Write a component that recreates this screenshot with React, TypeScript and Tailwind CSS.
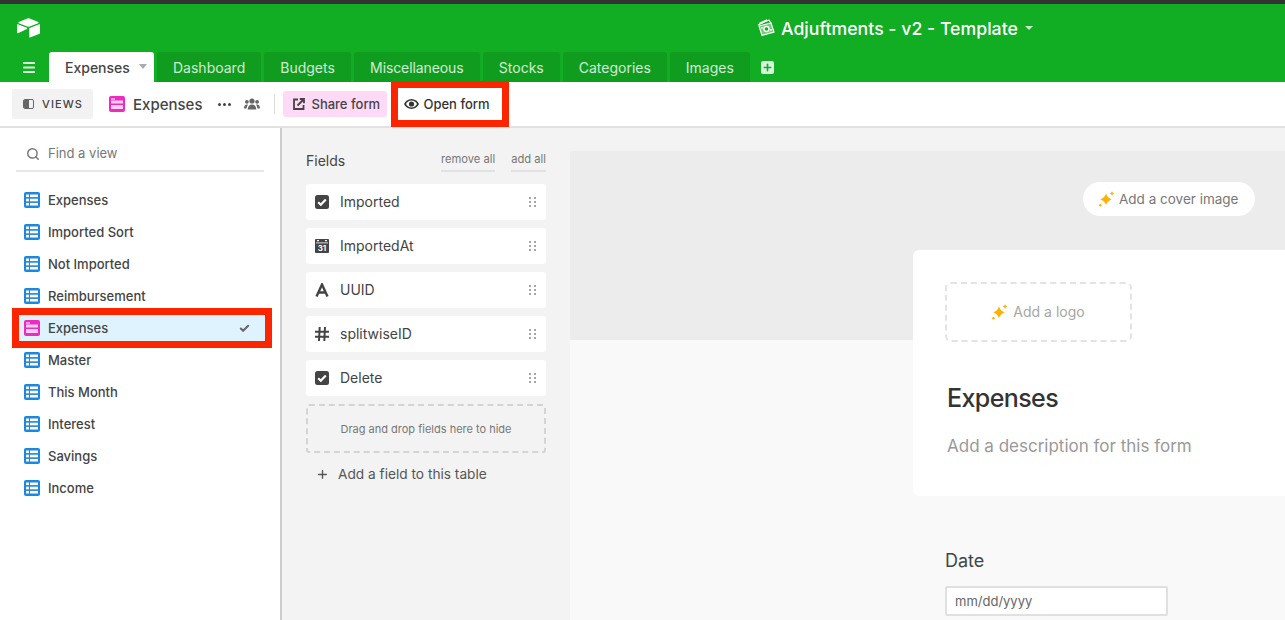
import { useState } from 'react'
import { Check, Search, Plus } from 'lucide-react'

const TABS = [
  { label: 'Dashboard', className: '' },
  { label: 'Budgets', className: '' },
  { label: 'Miscellaneous', className: 'w-[126px] justify-center tracking-[-0.1px]' },
  { label: 'Stocks', className: '' },
  { label: 'Categories', className: '' },
  { label: 'Images', className: '' },
]

const VIEWS = [
  { label: 'Expenses', kind: 'grid' },
  { label: 'Imported Sort', kind: 'grid' },
  { label: 'Not Imported', kind: 'grid' },
  { label: 'Reimbursement', kind: 'grid' },
  { label: 'Expenses', kind: 'form', active: true },
  { label: 'Master', kind: 'grid' },
  { label: 'This Month', kind: 'grid' },
  { label: 'Interest', kind: 'grid' },
  { label: 'Savings', kind: 'grid' },
  { label: 'Income', kind: 'grid' },
]

const FIELDS = [
  { label: 'Imported', kind: 'check' },
  { label: 'ImportedAt', kind: 'date' },
  { label: 'UUID', kind: 'text' },
  { label: 'splitwiseID', kind: 'number' },
  { label: 'Delete', kind: 'check' },
]

function Logo() {
  return (
    <svg width="23" height="20" viewBox="11 10 177 150" fill="#fff">
      <path d="M90.039 12.368 24.079 39.66c-3.667 1.519-3.63 6.729.062 8.192l66.235 26.266a24.58 24.58 0 0 0 18.12 0l66.236-26.266c3.69-1.463 3.729-6.673.062-8.192l-65.96-27.292a24.58 24.58 0 0 0-18.795 0" />
      <path d="M105.312 88.46v65.617c0 3.12 3.147 5.258 6.048 4.108l73.806-28.648a4.42 4.42 0 0 0 2.79-4.108V59.813c0-3.121-3.147-5.258-6.048-4.108l-73.806 28.648a4.42 4.42 0 0 0-2.79 4.108" />
      <path d="M88.078 91.846 66.174 102.422l-2.224 1.075-46.238 22.155c-2.93 1.414-6.672-.722-6.672-3.978V60.088c0-1.178.604-2.195 1.414-2.96a5 5 0 0 1 1.12-.84c1.104-.663 2.68-.84 4.02-.31l70.118 27.78c3.564 1.414 3.844 6.408.366 8.088" />
    </svg>
  )
}

function Hamburger() {
  return (
    <svg width="12" height="11" viewBox="0 0 12 11" fill="#fff" fillOpacity="0.85" className="shrink-0">
      <rect width="12" height="2" y="0" rx="0.500" />
      <rect width="12" height="2" y="4.500" rx="0.500" />
      <rect width="12" height="2" y="9" rx="0.500" />
    </svg>
  )
}

function GridIcon() {
  return (
    <svg width="16" height="16" viewBox="0 0 16 16" className="shrink-0">
      <rect width="16" height="16" rx="2" fill="#1a87e0" />
      <rect x="2" y="2.500" width="3" height="2.600" fill="#fff" />
      <rect x="6" y="2.500" width="8" height="2.600" fill="#fff" />
      <rect x="2" y="6.700" width="3" height="2.600" fill="#fff" />
      <rect x="6" y="6.700" width="8" height="2.600" fill="#fff" />
      <rect x="2" y="10.900" width="3" height="2.600" fill="#fff" />
      <rect x="6" y="10.900" width="8" height="2.600" fill="#fff" />
    </svg>
  )
}

function FormIcon() {
  return (
    <svg width="16" height="16" viewBox="0 0 16 16" className="shrink-0">
      <rect width="16" height="16" rx="2" fill="#ee2bbf" />
      <rect x="2" y="2.500" width="4" height="1" fill="#fff" />
      <rect x="2" y="4.500" width="12" height="3" fill="#ffd0f3" />
      <rect x="2" y="9" width="12" height="4" fill="#ffd0f3" />
    </svg>
  )
}

function Sparkle() {
  return (
    <svg width="16" height="16" viewBox="0 0 16 16" fill="#ffb000" className="shrink-0">
      <path d="M7 2.500Q8.500 6.900 12.800 8.300 8.500 9.700 7 14.100 5.500 9.700 1.200 8.300 5.500 6.900 7 2.500Z" />
      <path d="M13 .2Q13.600 2 15.300 2.500 13.600 3 13 4.800 12.400 3 10.700 2.500 12.400 2 13 .2Z" />
      <circle cx="1.400" cy="14.300" r="1.200" />
    </svg>
  )
}

function MoneyIcon() {
  return (
    <svg width="18" height="17" viewBox="0 0 18 17" fill="none" stroke="#fff" strokeWidth="1.200">
      <path d="M1 6 12 1l2 3.500" />
      <path d="M2.500 4.500 10 1" strokeWidth="1.600" />
      <path d="m2 7 12-3 3 9-12 3.400Z" fill="#ffffff66" />
      <circle cx="9.500" cy="10" r="2.500" fill="#11ad22" strokeWidth="1.400" />
      <circle cx="5" cy="8.800" r="0.900" fill="#fff" stroke="none" />
      <circle cx="14" cy="11" r="0.900" fill="#fff" stroke="none" />
    </svg>
  )
}

function PeopleIcon() {
  return (
    <svg width="16" height="12" viewBox="0 0 16 12" fill="#666" className="shrink-0">
      <circle cx="8" cy="3" r="2.600" />
      <circle cx="2.900" cy="3.800" r="1.900" />
      <circle cx="13.100" cy="3.800" r="1.900" />
      <path d="M3.700 11.500c0-3 1.700-5 4.300-5s4.300 2 4.300 5Z" />
      <path d="M0 10.500c0-2.300 1.100-3.900 3-3.900.4 0 .7.100 1 .2-.8.900-1.300 2.200-1.400 3.700Z" />
      <path d="M16 10.500c0-2.300-1.100-3.900-3-3.900-.4 0-.7.100-1 .2.800.9 1.300 2.200 1.400 3.700Z" />
    </svg>
  )
}

function ShareIcon() {
  return (
    <svg width="12" height="12" viewBox="0 0 12 12" fill="none" stroke="#444" strokeWidth="1.800" className="shrink-0">
      <path d="M5 1.500H1v9.500h9.500V7" />
      <path d="M4.500 7.500 11 1M6.800 1H11v4.200" />
    </svg>
  )
}

function EyeIcon() {
  return (
    <svg width="15" height="10" viewBox="0 0 15 10" className="shrink-0">
      <path d="M7.500 0C4 0 1.400 2.200 0 5c1.400 2.800 4 5 7.500 5S13.600 7.800 15 5C13.600 2.200 11 0 7.500 0Z" fill="#333" />
      <path d="M7.500 1.500C5 1.500 3.200 3 2 5c1.200 2 3 3.500 5.500 3.500S11.800 7 13 5c-1.200-2-3-3.500-5.500-3.500Z" fill="#fff" />
      <circle cx="7.500" cy="5" r="2.600" fill="#333" />
    </svg>
  )
}

function DragHandle() {
  return (
    <svg width="7" height="10" viewBox="0 0 7 10" fill="#a6a6a6" className="shrink-0">
      <rect x="0" y="0" width="2" height="2" />
      <rect x="5" y="0" width="2" height="2" />
      <rect x="0" y="4" width="2" height="2" />
      <rect x="5" y="4" width="2" height="2" />
      <rect x="0" y="8" width="2" height="2" />
      <rect x="5" y="8" width="2" height="2" />
    </svg>
  )
}

function FieldIcon({ kind }: { kind: string }) {
  if (kind === 'check') {
    return (
      <svg width="14" height="14" viewBox="0 0 14 14" className="shrink-0">
        <rect width="14" height="14" rx="2.500" fill="#444" />
        <path d="m3.200 7.200 2.600 2.500 5-5.200" fill="none" stroke="#fff" strokeWidth="2.200" />
      </svg>
    )
  }
  if (kind === 'date') {
    return (
      <svg width="14" height="14" viewBox="0 0 14 14" className="shrink-0">
        <rect width="14" height="14" rx="1" fill="#444" />
        <rect x="2" y="1" width="2" height="1.200" fill="#fff" />
        <rect x="10" y="1" width="2" height="1.200" fill="#fff" />
        <rect x="1" y="3.500" width="12" height="0.800" fill="#fff" />
        <text x="7" y="12" textAnchor="middle" fontSize="8" fontWeight="700" fill="#fff" fontFamily="Inter, sans-serif">
          31
        </text>
      </svg>
    )
  }
  if (kind === 'text') {
    return (
      <svg width="14" height="14" viewBox="0 0 14 14" fill="none" stroke="#444" strokeWidth="2.400" className="shrink-0">
        <path d="M1.500 13.500 7 1.500l5.500 12M3.500 9.500h7" />
      </svg>
    )
  }
  return (
    <svg width="14" height="14" viewBox="0 0 14 14" fill="none" stroke="#444" strokeWidth="2" className="shrink-0">
      <path d="M0 4.700h14M0 9.700h14M4.700 0 4 14M10 0l-.7 14" />
    </svg>
  )
}

export default function App() {
  const [query, setQuery] = useState('')

  return (
    <div className="flex h-[620px] w-[1285px] flex-col overflow-hidden bg-white font-['Inter',sans-serif] text-[#444]">
      <div className="h-[4px] shrink-0 bg-[#333]" />

      {/* Green base header */}
      <header className="h-[78px] shrink-0 bg-[#11ad22]">
        <div className="flex h-[48px] items-center pl-[17px] text-white">
          <Logo />
          <div className="ml-[717px] flex items-center">
            <MoneyIcon />
            <span className="ml-[6px] pt-[2px] text-[17.700px] font-medium">Adjuftments - v2 - Template</span>
            <span className="ml-[7px] mt-[1px] h-0 w-0 border-x-[4px] border-t-[4px] border-x-transparent border-t-white/80" />
          </div>
        </div>
        <div className="flex h-[30px] items-stretch">
          <div className="ml-[23px] mr-[14px] self-center">
            <Hamburger />
          </div>
          <div className="flex w-[105px] items-center rounded-t-[3px] bg-white pl-[16px] text-[14px] font-medium text-[#444]">
            Expenses
            <span className="ml-[9px] mb-[2px] h-0 w-0 border-x-[4px] border-t-[5px] border-x-transparent border-t-[#aaa]" />
          </div>
          <div className="ml-[3px] flex gap-[3px]">
            {TABS.map((tab) => (
              <div
                key={tab.label}
                className={`flex items-center rounded-t-[3px] bg-[#0f9c1f] px-[16px] text-[14px] text-white/80 ${tab.className}`}
              >
                {tab.label}
              </div>
            ))}
          </div>
          <div className="ml-[11px] flex h-[13px] w-[13px] items-center justify-center self-center rounded-[2px] bg-white/85">
            <Plus size={11} strokeWidth={3.500} className="text-[#11ad22]" />
          </div>
        </div>
      </header>

      {/* View toolbar */}
      <div className="flex h-[46px] shrink-0 items-center border-b-2 border-[#e2e2e2] pl-[12px]">
        <div className="flex h-[30px] w-[81px] items-center rounded-[3px] bg-[#f2f2f2] pl-[11px]">
          <span className="flex h-[10px] w-[11px] overflow-hidden rounded-[2px] border border-[#666]">
            <span className="w-1/2 bg-[#666]" />
          </span>
          <span className="ml-[8px] text-[11px] font-medium tracking-[0.1em] text-[#444]">VIEWS</span>
        </div>
        <div className="ml-[16px]">
          <FormIcon />
        </div>
        <span className="ml-[8px] pt-[2px] text-[15px] font-medium">Expenses</span>
        <span className="ml-[16px] flex gap-[2px]">
          <span className="h-[3px] w-[3px] rounded-full bg-[#444]" />
          <span className="h-[3px] w-[3px] rounded-full bg-[#444]" />
          <span className="h-[3px] w-[3px] rounded-full bg-[#444]" />
        </span>
        <span className="ml-[13px]">
          <PeopleIcon />
        </span>
        <span className="ml-[14px] h-[20px] w-px bg-[#ddd]" />
        <div className="ml-[8px] flex h-[26px] w-[104px] items-center rounded-[3px] bg-[#ffdaf6] pl-[10px] text-[13px] font-medium text-[#444]">
          <ShareIcon />
          <span className="ml-[6px] pt-[2px]">Share form</span>
        </div>
        <div className="ml-[11px] flex h-[32px] w-[104px] items-center bg-white pl-[6px] text-[13px] font-medium text-[#333] outline-[7px] outline-[#fb2500]">
          <EyeIcon />
          <span className="ml-[4px] pt-[2px]">Open form</span>
        </div>
      </div>

      <div className="flex min-h-0 flex-1">
        {/* Views sidebar */}
        <aside className="w-[282px] shrink-0 border-r-2 border-[#ccc] bg-white">
          <label className="mx-[16px] mt-[10px] flex h-[34px] items-center border-b-2 border-[#e6e6e6] pb-[1px] pl-[10px]">
            <Search size={14} strokeWidth={2.500} className="text-[#777]" />
            <input
              value={query}
              onChange={(e) => setQuery(e.target.value)}
              placeholder="Find a view"
              className="ml-[8px] w-[180px] bg-transparent text-[13px] outline-none placeholder:text-[#777]"
            />
          </label>
          <ul className="mt-[15px] flex flex-col gap-[6px] pl-[19px] pr-[15px]">
            {VIEWS.map((view, i) => (
              <li
                key={i}
                className={
                  view.active
                    ? 'flex h-[26px] items-center bg-[#dff3fe] pl-[5px] pr-[15px] outline-[7px] outline-[#fb2500]'
                    : 'flex h-[26px] items-center pl-[5px] pr-[15px]'
                }
              >
                {view.kind === 'grid' ? <GridIcon /> : <FormIcon />}
                <span className="ml-[8px] flex-1 pt-[2px] text-[13px] font-medium">{view.label}</span>
                {view.active && <Check size={11} strokeWidth={4.500} className="text-[#666]" />}
              </li>
            ))}
          </ul>
        </aside>

        {/* Field list */}
        <section className="w-[288px] shrink-0 bg-[#f3f3f3] pl-[24px] pr-[24px]">
          <div className="mt-[23px] flex h-[33px] items-start justify-between">
            <span className="text-[14px] leading-[20px]">Fields</span>
            <div className="flex gap-[16px] text-[11.200px] leading-[16px] text-[#777]">
              <span className="h-[21px] border-b-2 border-[#e2e2e2]">remove all</span>
              <span className="h-[21px] border-b-2 border-[#e2e2e2]">add all</span>
            </div>
          </div>
          <div className="flex flex-col gap-[8px]">
            {FIELDS.map((field) => (
              <div key={field.label} className="flex h-[36px] items-center rounded-[3px] bg-white pl-[9px] pr-[10px]">
                <FieldIcon kind={field.kind} />
                <span className="ml-[11px] flex-1 pb-[2px] text-[14px]">{field.label}</span>
                <DragHandle />
              </div>
            ))}
            <div className="flex h-[49px] items-center justify-center rounded-[3px] border-2 border-dashed border-[#d4d4d4] pt-[1px] text-[11px] text-[#777]">
              Drag and drop fields here to hide
            </div>
          </div>
          <div className="ml-[10px] mt-[11px] flex items-center text-[13.700px] text-[#555]">
            <Plus size={13} strokeWidth={2.500} />
            <span className="ml-[9px]">Add a field to this table</span>
          </div>
        </section>

        {/* Form preview */}
        <section className="min-w-0 flex-1 overflow-hidden bg-[#f3f3f3] pt-[23px]">
          <div className="h-full overflow-hidden rounded-tl-[3px] bg-[#f9f9f9]">
            <div className="flex h-[189px] items-start justify-end bg-[#ececec] pr-[30px] pt-[31px]">
              <div className="flex h-[34px] w-[172px] items-center rounded-full bg-white pl-[16px] text-[13.500px] text-[#777]">
                <Sparkle />
                <span className="ml-[4px]">Add a cover image</span>
              </div>
            </div>
            <div className="relative ml-[343px] mt-[-90px] h-[246px] w-[500px] rounded-[6px] bg-white pl-[32px] pt-[32px]">
              <div className="flex h-[60px] w-[187px] items-center justify-center rounded-[6px] border-2 border-dashed border-[#e3e3e3] text-[14px] text-[#a6a6a6]">
                <Sparkle />
                <span className="ml-[5px] pb-[2px]">Add a logo</span>
              </div>
              <h1 className="ml-[2px] mt-[38px] text-[25px] font-medium leading-[36px] tracking-[-0.6px] text-[#333]">Expenses</h1>
              <p className="ml-[2px] mt-[18px] text-[17px] leading-[24px] text-[#999]">Add a description for this form</p>
            </div>
            <div className="ml-[375px] mt-[53px]">
              <div className="text-[18px] leading-[24px] text-[#444]">Date</div>
              <div className="mt-[13px] flex h-[30px] w-[223px] items-center rounded-[2px] border-2 border-[#e0e0e0] bg-white pl-[8px] pt-[2px] text-[13px] text-[#666]">
                mm/dd/yyyy
              </div>
            </div>
          </div>
        </section>
      </div>
    </div>
  )
}
